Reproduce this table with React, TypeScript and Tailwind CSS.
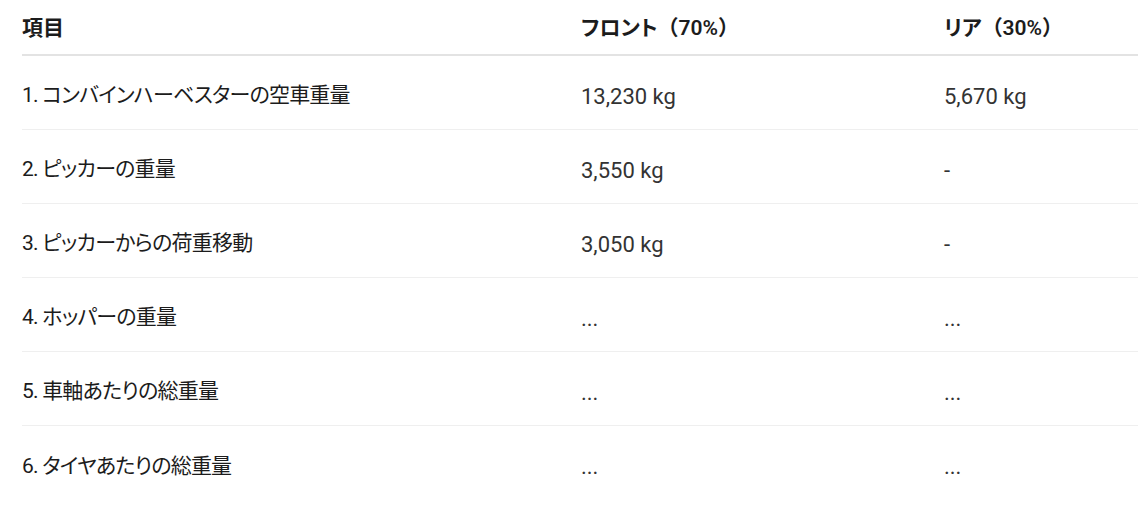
const rows = [
  { label: "1. コンバインハーベスターの空車重量", front: "13,230 kg", rear: "5,670 kg" },
  { label: "2. ピッカーの重量", front: "3,550 kg", rear: "-" },
  { label: "3. ピッカーからの荷重移動", front: "3,050 kg", rear: "-" },
  { label: "4. ホッパーの重量", front: "...", rear: "..." },
  { label: "5. 車軸あたりの総重量", front: "...", rear: "..." },
  { label: "6. タイヤあたりの総重量", front: "...", rear: "..." },
]

export default function App() {
  return (
    <div
      className="h-[512px] w-[1140px] overflow-hidden bg-white pl-[22px] pr-[2px] text-[21px] text-[#1c1c1c]"
      style={{ fontFamily: 'Roboto, "Noto Sans CJK JP", sans-serif' }}
    >
      <div className="grid h-[56px] grid-cols-[559px_363px_1fr] items-center border-b-2 border-[#e3e3e3] pt-[3px] font-semibold">
        <div>項目</div>
        <div>
          <span className="[font-feature-settings:'palt']">フロント</span>
          <span>（70%）</span>
        </div>
        <div>
          <span className="[font-feature-settings:'palt']">リア</span>
          <span>（30%）</span>
        </div>
      </div>
      {rows.map((row, i) => (
        <div
          key={row.label}
          className={`grid h-[74px] grid-cols-[559px_363px_1fr] items-center pt-[7px] ${i < rows.length - 1 ? "border-b border-[#efefef]" : ""}`}
        >
          <div className="tracking-[-0.8px] [font-feature-settings:'palt']">{row.label}</div>
          <div className="text-[22px] text-[#333]">{row.front}</div>
          <div className="text-[22px] text-[#333]">{row.rear}</div>
        </div>
      ))}
    </div>
  )
}
